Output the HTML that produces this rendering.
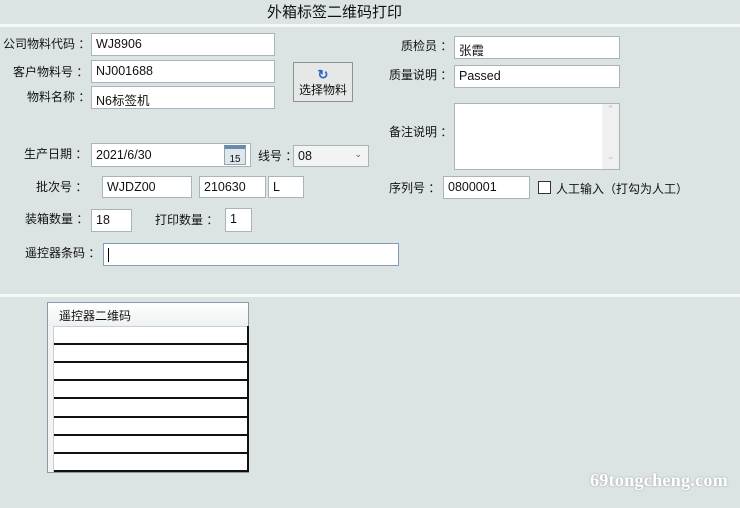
<!DOCTYPE html><html><head><meta charset="utf-8"><style>
body{margin:0;width:740px;height:508px;background:#dce4e3;position:relative;overflow:hidden;font-family:"Liberation Sans","Noto Sans CJK SC",sans-serif;font-size:12px;color:#111}
.a{position:absolute;white-space:nowrap}
.i{position:absolute;background:#fff;border:1px solid #a9b3bb;box-sizing:border-box;padding:3px 0 0 4px;font-size:12.5px}
.l{position:absolute;white-space:nowrap;font-size:12px}
.hl{position:absolute;left:0;width:740px;height:3px;background:#f6f8f8}
.r{position:absolute;left:54px;width:194px;height:2px;background:#111}
</style></head><body>
<div class="a" style="left:267px;top:1px;font-size:15px">外箱标签二维码打印</div>
<div class="hl" style="top:24px"></div>
<div class="l" style="left:3px;top:35px">公司物料代码 ：</div>
<div class="i" style="left:91px;top:33px;width:184px;height:23px">WJ8906</div>
<div class="l" style="left:13px;top:63px">客户物料号 ：</div>
<div class="i" style="left:91px;top:60px;width:184px;height:23px">NJ001688</div>
<div class="l" style="left:27px;top:88px">物料名称 ：</div>
<div class="i" style="left:91px;top:86px;width:184px;height:23px">N6标签机</div>
<div class="a" style="left:293px;top:62px;width:60px;height:40px;border:1px solid #8a9298;background:#e6e8e8;box-sizing:border-box;text-align:center">
<div style="color:#2a63c8;font-size:13px;line-height:13px;margin-top:5px;font-weight:bold">↻</div><div style="font-size:12px">选择物料</div></div>
<div class="l" style="left:24px;top:145px">生产日期 ：</div>
<div class="i" style="left:91px;top:143px;width:160px;height:24px;padding-top:4px">2021/6/30</div>
<div class="a" style="left:224px;top:145px;width:22px;height:20px;background:#dfe6ec;border:1px solid #8aa;box-sizing:border-box;font-size:10px;text-align:center;padding-top:6px;border-top:4px solid #6a8ab0;line-height:9px">15</div>
<div class="l" style="left:258px;top:147px">线号 ：</div>
<div class="i" style="left:293px;top:145px;width:76px;height:22px;background:#f2f3f3">08<span style="position:absolute;right:6px;top:3px;font-size:9px;color:#666">⌄</span></div>
<div class="l" style="left:36px;top:178px">批次号 ：</div>
<div class="i" style="left:102px;top:176px;width:90px;height:22px">WJDZ00</div>
<div class="i" style="left:199px;top:176px;width:67px;height:22px">210630</div>
<div class="i" style="left:268px;top:176px;width:36px;height:22px">L</div>
<div class="l" style="left:25px;top:210px">装箱数量 ：</div>
<div class="i" style="left:91px;top:209px;width:41px;height:23px">18</div>
<div class="l" style="left:155px;top:211px">打印数量 ：</div>
<div class="i" style="left:225px;top:208px;width:27px;height:24px">1</div>
<div class="l" style="left:25px;top:244px">遥控器条码 ：</div>
<div class="i" style="left:103px;top:243px;width:296px;height:23px;border-color:#7f9db9"><span style="display:inline-block;width:1px;height:14px;background:#000;margin-top:1px"></span></div>
<div class="l" style="left:401px;top:37px">质检员 ：</div>
<div class="i" style="left:454px;top:36px;width:166px;height:23px">张霞</div>
<div class="l" style="left:389px;top:66px">质量说明 ：</div>
<div class="i" style="left:454px;top:65px;width:166px;height:23px">Passed</div>
<div class="l" style="left:389px;top:123px">备注说明 ：</div>
<div class="i" style="left:454px;top:103px;width:166px;height:67px"><div style="position:absolute;right:0;top:0;width:17px;height:65px;background:#f0f0f0;color:#bbb;font-size:9px;text-align:center">⌃<div style="margin-top:36px">⌄</div></div></div>
<div class="l" style="left:389px;top:179px">序列号 ：</div>
<div class="i" style="left:443px;top:176px;width:87px;height:23px">0800001</div>
<div class="a" style="left:538px;top:181px;width:13px;height:13px;background:#fff;border:1px solid #333;box-sizing:border-box"></div>
<div class="l" style="left:556px;top:180px">人工输入（打勾为人工）</div>
<div class="hl" style="top:294px"></div>
<div class="a" style="left:47px;top:302px;width:202px;height:171px;background:#fff;border:1px solid #8899aa;box-sizing:border-box"></div>
<div class="a" style="left:48px;top:303px;width:200px;height:23px;background:linear-gradient(#fff,#eef1f3);border-bottom:1px solid #ccd"></div>
<div class="a" style="left:59px;top:307px;font-size:12px">遥控器二维码</div>
<div class="a" style="left:48px;top:326px;width:5px;height:146px;background:#f3f4f4;border-right:1px solid #ccd"></div>
<div class="a" style="left:247px;top:326px;width:2px;height:146px;background:#111"></div>
<div class="r" style="top:343px"></div><div class="r" style="top:361px"></div><div class="r" style="top:379px"></div><div class="r" style="top:397px"></div><div class="r" style="top:416px"></div><div class="r" style="top:434px"></div><div class="r" style="top:452px"></div><div class="r" style="top:470px"></div>
<div class="a" style="left:590px;top:470px;font-family:'Liberation Serif',serif;font-size:18px;font-weight:bold;letter-spacing:0.3px;color:#fff;text-shadow:0 0 2px #99a"> 69tongcheng.com</div>
</body></html>
